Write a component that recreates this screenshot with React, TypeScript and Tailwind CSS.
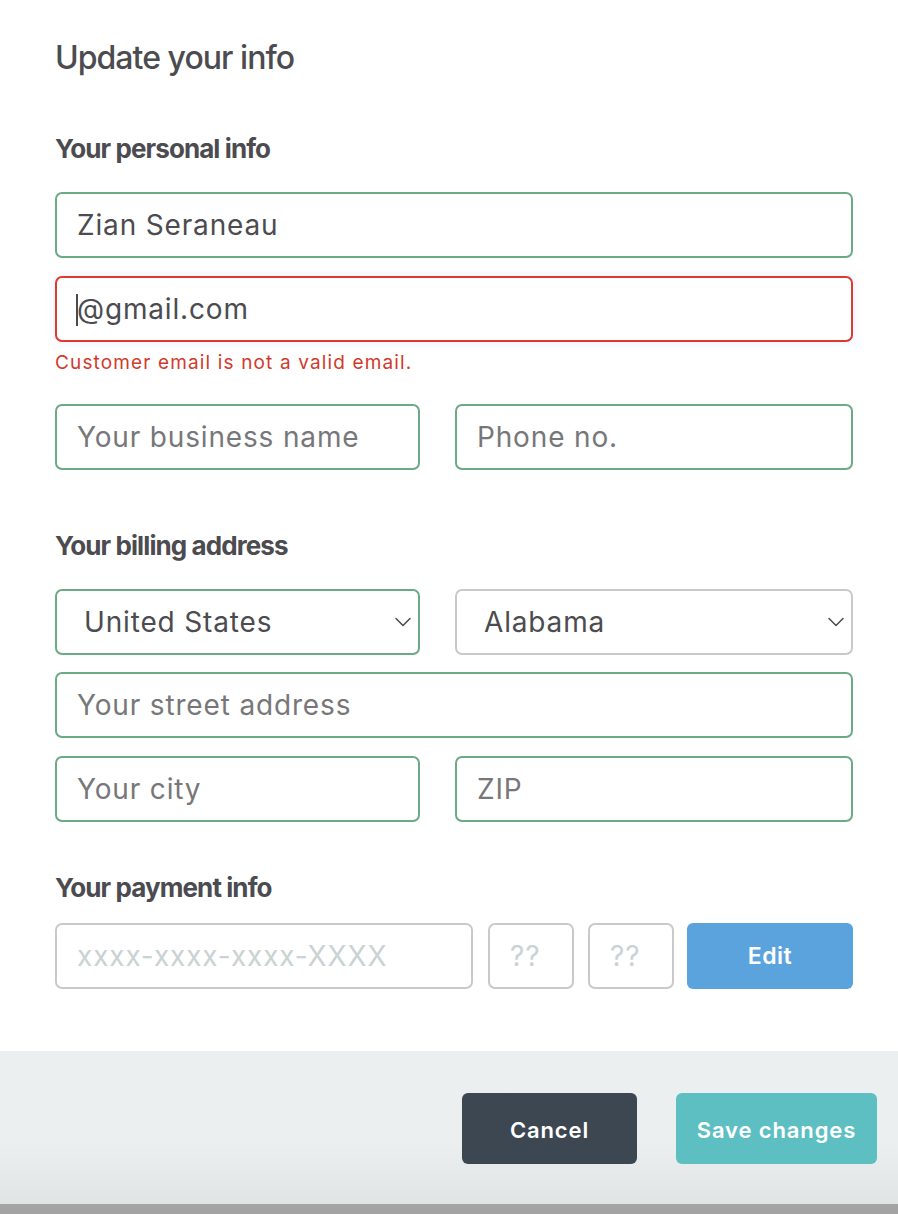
import { ChevronDown } from 'lucide-react';

const font = { fontFamily: 'Inter, "Noto Sans", sans-serif' };

const inputBase =
  'h-[66px] rounded-[7px] border-2 bg-white px-[20px] text-[28px] tracking-[0.03em] text-[#4b4b50] outline-none placeholder:text-[#77777a]';

function Field({ placeholder, value, tone = 'green' }: { placeholder?: string; value?: string; tone?: 'green' | 'gray' }) {
  const border = tone === 'green' ? 'border-[#6aab85]' : 'border-[#c9c9c9]';
  return (
    <input
      className={`${inputBase} w-full ${border}`}
      placeholder={placeholder}
      defaultValue={value}
      style={font}
    />
  );
}

function Select({ value, tone }: { value: string; tone: 'green' | 'gray' }) {
  const border = tone === 'green' ? 'border-[#6aab85]' : 'border-[#c9c9c9]';
  return (
    <div className="relative">
      <select
        className={`${inputBase} w-full ${border} appearance-none pl-[27px]`}
        defaultValue={value}
        style={font}
      >
        <option>{value}</option>
      </select>
      <ChevronDown
        className="pointer-events-none absolute right-[3px] top-1/2 -translate-y-1/2 text-[#4b4b50]"
        size={28}
        strokeWidth={1.3}
      />
    </div>
  );
}

const heading = 'text-[26px] leading-[32px] font-bold tracking-[-0.035em] text-[#4b4b50]';

export default function App() {
  return (
    <div className="min-h-screen bg-white flex flex-col" style={font}>
      <div className="px-[55px] pr-[45px]">
        {/* Title */}
        <h1 className="pt-[38px] text-[32px] leading-[40px] font-medium tracking-[-0.03em] text-[#4b4b50]">
          Update your info
        </h1>

        {/* Personal info */}
        <h2 className={`mt-[55px] ${heading}`}>Your personal info</h2>
        <div className="mt-[27px]">
          <Field value="Zian Seraneau" />
        </div>
        <div className="relative mt-[18px]">
          <input
            className={`${inputBase} w-full border-[#dc3a2c] shadow-[0_0_10px_rgba(90,110,255,0.14)]`}
            defaultValue="@gmail.com"
            style={font}
          />
          <span className="absolute left-[21px] top-[18px] h-[32px] w-[2px] bg-[#4b4b50]" />
        </div>
        <p className="mt-[9px] text-[19px] leading-[24px] tracking-[0.06em] text-[#d13a2c]">
          Customer email is not a valid email.
        </p>
        <div className="mt-[29px] grid grid-cols-[365px_1fr] gap-[35px]">
          <Field placeholder="Your business name" />
          <Field placeholder="Phone no." />
        </div>

        {/* Billing address */}
        <h2 className={`mt-[60px] ${heading}`}>Your billing address</h2>
        <div className="mt-[27px] grid grid-cols-[365px_1fr] gap-[35px]">
          <Select value="United States" tone="green" />
          <Select value="Alabama" tone="gray" />
        </div>
        <div className="mt-[17px]">
          <Field placeholder="Your street address" />
        </div>
        <div className="mt-[18px] grid grid-cols-[365px_1fr] gap-[35px]">
          <Field placeholder="Your city" />
          <Field placeholder="ZIP" />
        </div>

        {/* Payment info */}
        <h2 className={`mt-[50px] ${heading}`}>Your payment info</h2>
        <div className="mt-[19px] flex items-center">
          <input
            className={`${inputBase} w-[418px] shrink-0 border-[#c9c9c9] placeholder:text-[#c9d3d3]`}
            placeholder="xxxx-xxxx-xxxx-XXXX"
            style={font}
          />
          <input
            className={`${inputBase} ml-[15px] w-[86px] shrink-0 border-[#c9c9c9] px-[19px] placeholder:text-[#c9d3d3]`}
            placeholder="??"
            style={font}
          />
          <input
            className={`${inputBase} ml-[14px] w-[86px] shrink-0 border-[#c9c9c9] px-[19px] placeholder:text-[#c9d3d3]`}
            placeholder="??"
            style={font}
          />
          <button className="ml-[13px] h-[66px] w-[166px] shrink-0 rounded-[6px] bg-[#5aa3dd] text-[23px] font-semibold tracking-[0.02em] text-white">
            Edit
          </button>
        </div>
      </div>

      {/* Footer */}
      <div className="mt-[62px] bg-gradient-to-b from-[#ebeff0] from-60% to-[#e1e4e5] pt-[42px] pb-[40px] pr-[21px] flex justify-end gap-[39px]">
        <button className="h-[71px] w-[175px] rounded-[6px] bg-[#3d4751] pt-[3px] text-[22px] font-semibold tracking-[0.04em] text-white">
          Cancel
        </button>
        <button className="h-[71px] w-[201px] rounded-[6px] bg-[#5dbfc2] pt-[3px] text-[22px] font-semibold tracking-[0.04em] text-white">
          Save changes
        </button>
      </div>
      <div className="h-[12px] bg-[#a3a3a3]" />
    </div>
  );
}
